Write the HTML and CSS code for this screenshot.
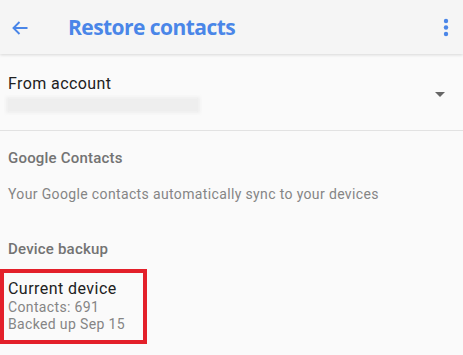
FILE: index.html
```html
<!DOCTYPE html>
<html>
<head>
<meta charset="utf-8">
<link rel="stylesheet" href="styles.css">
</head>
<body>
<header class="appbar">
  <svg class="back" width="18" height="16" viewBox="0 0 18 16">
    <path d="M16.5 8H2.5M8.5 2L2.5 8L8.5 14" fill="none" stroke="#4a86e8" stroke-width="1.9" stroke-linecap="butt" stroke-linejoin="miter"/>
  </svg>
  <h1 class="title">Restore contacts</h1>
  <svg class="kebab" width="6" height="20" viewBox="0 0 6 20">
    <circle cx="3" cy="3" r="2.2" fill="#4a86e8"/>
    <circle cx="3" cy="9.5" r="2.2" fill="#4a86e8"/>
    <circle cx="3" cy="16" r="2.2" fill="#4a86e8"/>
  </svg>
</header>
<section class="account">
  <div class="account-text">
    <div class="label">From account</div>
    <div class="blur-bar"></div>
  </div>
  <span class="caret"></span>
</section>
<section class="group">
  <div class="group-title">Google Contacts</div>
  <div class="desc">Your Google contacts automatically sync to your devices</div>
  <div class="group-title second">Device backup</div>
  <div class="highlight">
    <div class="item-title">Current device</div>
    <div class="item-sub">Contacts: 691</div>
    <div class="item-sub">Backed up Sep 15</div>
  </div>
</section>
</body>
</html>
```

FILE: styles.css
```css
html, body {
  margin: 0;
  padding: 0;
  background: #fafafa;
  font-family: Roboto, "Noto Sans", sans-serif;
  height: 355px;
  overflow: hidden;
}
.appbar {
  height: 54px;
  background: #f5f5f5;
  box-shadow: 0 1px 3px rgba(0,0,0,0.14);
  display: flex;
  align-items: center;
  padding: 0 14px 0 11px;
  box-sizing: border-box;
  position: relative;
  z-index: 1;
}
.back {
  display: block;
  margin-top: 2px;
}
.title {
  margin: 0 0 0 39px;
  font-family: "Open Sans", sans-serif;
  font-weight: 700;
  font-size: 21px;
  color: #4a86e8;
  letter-spacing: -0.55px;
  flex: 1;
}
.kebab {
  display: block;
  margin-top: 1px;
}
.account {
  display: flex;
  align-items: center;
  padding: 20px 18px 17px 8px;
  border-bottom: 1px solid #e2e2e2;
}
.account-text {
  flex: 1;
}
.label {
  font-size: 16px;
  line-height: 20px;
  color: #212121;
  letter-spacing: 0.4px;
}
.blur-bar {
  margin: 3px 0 0 -2px;
  width: 194px;
  height: 16px;
  background: #eeeeee;
  filter: blur(1.5px);
}
.caret {
  width: 0;
  height: 0;
  border-left: 5px solid transparent;
  border-right: 5px solid transparent;
  border-top: 5px solid #666;
  margin-top: 2px;
}
.group {
  padding: 17px 0 0 0;
}
.group-title {
  font-size: 15px;
  font-weight: 500;
  line-height: 20px;
  color: #737373;
  padding-left: 8px;
  letter-spacing: 0.2px;
}
.group-title.second {
  margin-top: 35px;
}
.desc {
  margin-top: 16px;
  font-size: 14px;
  line-height: 20px;
  color: #858585;
  padding-left: 8px;
  letter-spacing: 0.36px;
}
.highlight {
  margin-top: 10px;
  width: 147px;
  box-sizing: border-box;
  border: 4px solid #e3202a;
  padding: 5px 0 7px 4px;
}
.item-title {
  font-size: 16px;
  line-height: 21px;
  color: #212121;
  letter-spacing: 0.45px;
}
.item-sub {
  font-size: 14px;
  line-height: 17px;
  color: #858585;
  letter-spacing: 0.35px;
}
```
